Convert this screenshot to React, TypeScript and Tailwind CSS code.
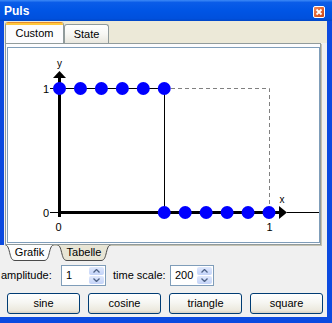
import React from "react";

const ui = "font-['Liberation_Sans','Noto_Sans',Arial,sans-serif]";
const dotX = (i: number) => 59.5 + 20.95 * i;

function CloseButton() {
  return (
    <div className="mt-[6px] flex h-[12px] w-[12px] items-center justify-center rounded-[2px] border border-white bg-[linear-gradient(135deg,#f08a5c_0%,#e0602c_55%,#c9471a_100%)]">
      <svg width="8" height="8" viewBox="0 0 8 8">
        <path d="M1.5 1.5 L6.5 6.5 M6.5 1.5 L1.5 6.5" stroke="#fff" strokeWidth="1.8" />
      </svg>
    </div>
  );
}

function Chart() {
  const label = { fontFamily: "Liberation Sans, Arial, sans-serif" };
  return (
    <svg width={311} height={194} viewBox="8 48 311 194" className="block">
      {/* rest of the period, dashed */}
      <path d="M171 88.5 H269.5 V206" fill="none" stroke="#808080" strokeDasharray="4 3" />
      <line x1={59.5} y1={88.5} x2={164.5} y2={88.5} stroke="#000" />
      <line x1={164.5} y1={88.5} x2={164.5} y2={212} stroke="#000" />

      {/* axes */}
      <rect x={58} y={77} width={3} height={140} fill="#000" />
      <polygon points="59.5,71 53,78 66,78" fill="#000" />
      <rect x={58} y={211} width={221} height={3} fill="#000" />
      <polygon points="287,212.5 279,206 279,219" fill="#000" />
      <line x1={287} y1={212.5} x2={319} y2={212.5} stroke="#000" />
      <line x1={50} y1={88.5} x2={58} y2={88.5} stroke="#000" />
      <line x1={50} y1={212.5} x2={58} y2={212.5} stroke="#000" />

      <text x={59.5} y={67} fontSize={10} textAnchor="middle" style={label}>y</text>
      <text x={282} y={203} fontSize={10} textAnchor="middle" style={label}>x</text>
      <text x={49} y={92.5} fontSize={11} textAnchor="end" style={label}>1</text>
      <text x={49} y={216.5} fontSize={11} textAnchor="end" style={label}>0</text>
      <text x={58.5} y={231} fontSize={11} textAnchor="middle" style={label}>0</text>
      <text x={269.5} y={231} fontSize={11} textAnchor="middle" style={label}>1</text>

      {[0, 1, 2, 3, 4, 5].map((i) => (
        <circle key={"t" + i} cx={dotX(i)} cy={88.5} r={6.5} fill="#0000ff" />
      ))}
      {[5, 6, 7, 8, 9, 10].map((i) => (
        <circle key={"b" + i} cx={dotX(i)} cy={212.5} r={6.5} fill="#0000ff" />
      ))}
    </svg>
  );
}

function tabPath(w: number) {
  return `M0.5 0 C3 0 4 5 5 9 C6 13 7 15.5 10 15.5 H${w - 10} C${w - 7} 15.5 ${w - 6} 13 ${w - 5} 9 C${w - 4} 5 ${w - 3} 0 ${w - 0.5} 0`;
}

function Spinner({ value, className }: { value: string; className: string }) {
  return (
    <div className={"flex h-[21px] items-stretch border border-[#7f9db9] bg-white " + className}>
      <span className="flex-1 pl-[4px] leading-[19px]">{value}</span>
      <div className="my-[1px] mr-[1px] flex w-[15px] flex-col gap-[1px]">
        <div className="flex flex-1 items-center justify-center rounded-[2px] bg-[linear-gradient(180deg,#dfe8fc_0%,#c3d3f8_100%)]">
          <svg width="7" height="4" viewBox="0 0 7 4">
            <path d="M0.5 3.5 L3.5 0.5 L6.5 3.5" fill="none" stroke="#4d6185" strokeWidth="1.3" />
          </svg>
        </div>
        <div className="flex flex-1 items-center justify-center rounded-[2px] bg-[linear-gradient(180deg,#dfe8fc_0%,#c3d3f8_100%)]">
          <svg width="7" height="4" viewBox="0 0 7 4">
            <path d="M0.5 0.5 L3.5 3.5 L6.5 0.5" fill="none" stroke="#4d6185" strokeWidth="1.3" />
          </svg>
        </div>
      </div>
    </div>
  );
}

function XpButton({ children }: { children: React.ReactNode }) {
  return (
    <button className="flex h-[21px] w-[73px] items-center justify-center rounded-[3px] border border-[#003c74] bg-[linear-gradient(180deg,#ffffff_0%,#f6f6f2_45%,#ece9de_85%,#d6d0c5_100%)] text-[11px] text-black">
      {children}
    </button>
  );
}

export default function App() {
  return (
    <div className={"flex h-[323px] w-[332px] flex-col overflow-hidden bg-[#f0f0f0] text-[11px] text-black " + ui}>
      {/* title bar */}
      <div className="flex h-[21px] items-start justify-between bg-[linear-gradient(180deg,#3d8af7_0%,#0a5ce8_12%,#0055e5_50%,#0050dd_88%,#0046c6_100%)] pl-[4px] pr-[7px]">
        <span className="pt-[5px] text-[12px] font-bold leading-[13px] text-white">Puls</span>
        <CloseButton />
      </div>

      <div className="flex flex-1 flex-col border-r-[5px] border-b-[6px] border-[#0b4ae0]">
        <div className="flex h-[224px] flex-col border-l-4 border-[#0b4ae0]">
          {/* top tabs */}
          <div className="flex h-[22px] items-end bg-[#ece9d8] pl-[1px]">
            <div className="flex h-[21px] w-[59px] flex-col overflow-hidden rounded-t-[3px] border-x border-[#919b9c] bg-[#fcfcfe]">
              <div className="h-[1px] bg-[#e68b2c]" />
              <div className="h-[2px] bg-[#ffc73c]" />
              <div className="flex flex-1 items-center justify-center pb-[1px]">Custom</div>
            </div>
            <div className="flex h-[19px] w-[45px] items-center justify-center rounded-t-[3px] border border-b-0 border-[#919b9c] bg-[linear-gradient(180deg,#ffffff_0%,#f7f7f4_50%,#e9e7de_100%)]">
              State
            </div>
          </div>

          {/* tab content */}
          <div className="ml-[1px] h-[202px] w-[316px] border border-[#919b9c] bg-[#fcfcfe] pl-[1px] pt-[3px] pb-[1px] shadow-[1px_1px_0_#c5c2b2]">
            <div className="w-[313px] border border-[#7f9db9] bg-white">
              <Chart />
            </div>
          </div>
        </div>

        {/* bottom tabs */}
        <div className="flex h-[16px] items-start gap-[3px] pl-[5px]">
          <div className="relative flex h-[16px] w-[49px] items-center justify-center pb-[1px]">
            <svg className="absolute inset-0" width="49" height="16" viewBox="0 0 49 16">
              <path d={tabPath(49)} fill="#fdfdfd" stroke="#4a4a4a" />
            </svg>
            <span className="relative">Grafik</span>
          </div>
          <div className="relative flex h-[16px] w-[54px] items-center justify-center pb-[1px]">
            <svg className="absolute inset-0" width="54" height="16" viewBox="0 0 54 16">
              <path d={tabPath(54)} fill="#e8e5d5" stroke="#4a4a4a" />
            </svg>
            <span className="relative">Tabelle</span>
          </div>
        </div>

        {/* controls */}
        <div className="flex flex-col pt-[4px] pb-[3px]">
          <div className="flex h-[21px] items-center pl-[1px]">
            <span className="w-[60px]">amplitude:</span>
            <Spinner value="1" className="w-[45px]" />
            <span className="ml-[7px] w-[57px]">time scale:</span>
            <Spinner value="200" className="w-[44px]" />
          </div>
          <div className="mt-[7px] flex gap-[8px] pl-[7px]">
            <XpButton>sine</XpButton>
            <XpButton>cosine</XpButton>
            <XpButton>triangle</XpButton>
            <XpButton>square</XpButton>
          </div>
        </div>
      </div>
    </div>
  );
}
